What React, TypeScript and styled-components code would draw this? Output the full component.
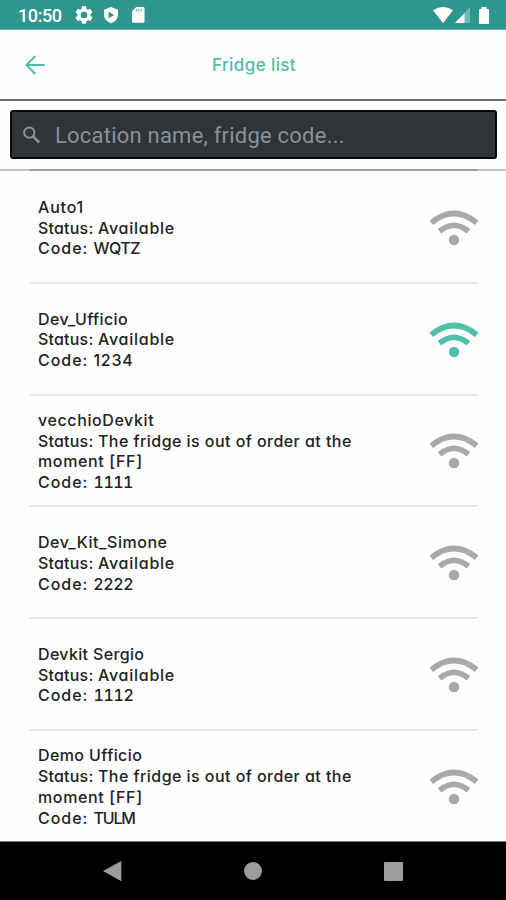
import React from "react";
import styled, { createGlobalStyle } from "styled-components";

const GlobalStyle = createGlobalStyle`
  * { box-sizing: border-box; }
  body { margin: 0; background: #fefefe; }
`;

const Screen = styled.main`
  width: 506px;
  height: 900px;
  display: flex;
  flex-direction: column;
  overflow: hidden;
  background: #fefefe;
`;

const StatusBar = styled.div`
  height: 30px;
  flex: none;
  display: flex;
  align-items: center;
  justify-content: space-between;
  padding: 1px 16px 0 18px;
  background: #2d968d;
  border-bottom: 1px solid #6bb5ae;
  color: #fff;
`;

const StatusGroup = styled.div<{ $gap: number }>`
  display: flex;
  align-items: center;
  gap: ${(p) => p.$gap}px;
  svg { display: block; }
`;

const Clock = styled.span`
  padding-top: 1px;
  font: 500 18px/20px Roboto, sans-serif;
  letter-spacing: -0.4px;
  width: 48px;
  white-space: nowrap;
`;

const Header = styled.header`
  height: 71px;
  flex: none;
  display: grid;
  grid-template-columns: 70px 1fr 70px;
  align-items: center;
  border-bottom: 2px solid #6b6a6b;
`;

const BackButton = styled.button`
  border: 0;
  padding: 0 0 0 24px;
  background: none;
  display: flex;
`;

const Title = styled.h1`
  margin: 0 0 0 2px;
  text-align: center;
  font: 500 17px/24px Inter, sans-serif;
  font-feature-settings: "cv11";
  letter-spacing: 0.4px;
  color: #4fbcab;
`;

const SearchArea = styled.div`
  height: 70px;
  flex: none;
  display: flex;
  flex-direction: column;
  justify-content: space-between;
`;

const SearchBox = styled.div`
  height: 49px;
  margin: 9px 9px 0 10px;
  display: flex;
  align-items: center;
  gap: 12px;
  padding-left: 9px;
  border: 2px solid #070a0c;
  border-radius: 3px;
  background: #2f3437;
  svg { flex: none; }
`;

const Placeholder = styled.span`
  padding-top: 2px;
  font: 400 22px/28px Roboto, sans-serif;
  letter-spacing: 0.22px;
  color: #8a9098;
  white-space: nowrap;
`;

const SearchRule = styled.div`
  height: 2px;
  border: solid #c4c4c4;
  border-width: 0 28px 0 30px;
  background: #9b9b9b;
`;

const List = styled.ul`
  flex: 1;
  min-height: 0;
  margin: 0;
  padding: 1px 28px 0 30px;
  list-style: none;
  overflow: hidden;
`;

const Row = styled.li`
  height: 111.8px;
  display: flex;
  align-items: center;
  justify-content: space-between;
  padding: 2px 0 0 8px;
  border-bottom: 2px solid #e9e9e9;
  svg { flex: none; margin-right: -1px; }
  &:last-child { border-bottom-color: transparent; }
`;

const Info = styled.div`
  display: flex;
  flex-direction: column;
`;

const Line = styled.span`
  font: 500 16px/20.7px Inter, sans-serif;
  color: #222;
  white-space: pre;
`;

const Run = styled.span<{ $track: number; $tabular?: boolean }>`
  letter-spacing: ${(p) => p.$track}px;
  font-feature-settings: "cv11", "calt" 0${(p) => (p.$tabular ? ', "tnum"' : "")};
`;

const NavBar = styled.nav`
  height: 59px;
  flex: none;
  display: flex;
  align-items: center;
  justify-content: space-between;
  padding: 0 102px;
  background: #000;
  border-top: 1px solid #777;
`;

const Wifi = ({ color }: { color: string }) => (
  <svg width="50" height="38" viewBox="0 0 50 38" fill="none" stroke={color} strokeWidth="5.6">
    <path d="M2.3 13.7Q25 -4.7 47.7 13.7" />
    <path d="M10.5 22.3Q25 10.6 39.5 22.3" />
    <circle cx="25" cy="31" r="5.2" fill={color} stroke="none" />
  </svg>
);

type Text = [string, number];
interface Fridge {
  name: Text;
  status: Text;
  more?: Text;
  code: Text;
  tabular?: boolean;
  near?: boolean;
}

const available: Text = ["Available", 0.75];
const outOfOrder: Text = ["The fridge is out of order at the", 0.45];
const moment: Text = ["moment [FF]", 0.65];

const fridges: Fridge[] = [
  { name: ["Auto1", 0.8], status: available, code: ["WQTZ", -0.5] },
  { name: ["Dev_Ufficio", 0.4], status: available, code: ["1234", 0.7], near: true },
  { name: ["vecchioDevkit", 0.6], status: outOfOrder, more: moment, code: ["1111", -0.5], tabular: true },
  { name: ["Dev_Kit_Simone", 0.55], status: available, code: ["2222", 0.1] },
  { name: ["Devkit Sergio", 0.35], status: available, code: ["1112", -0.4], tabular: true },
  { name: ["Demo Ufficio", 0.4], status: outOfOrder, more: moment, code: ["TULM", -1.2] },
];

export default function App() {
  return (
    <Screen>
      <GlobalStyle />
      <StatusBar>
        <StatusGroup $gap={9}>
          <Clock>10:50</Clock>
          <svg width="18" height="18" viewBox="2 2 20 20" fill="#fff">
            <path d="M19.14 12.94c.04-.3.06-.61.06-.94 0-.32-.02-.64-.07-.94l2.03-1.58c.18-.14.23-.41.12-.61l-1.92-3.32c-.12-.22-.37-.29-.59-.22l-2.39.96c-.5-.38-1.03-.7-1.62-.94l-.36-2.54c-.04-.24-.24-.41-.48-.41h-3.84c-.24 0-.43.17-.47.41l-.36 2.54c-.59.24-1.13.57-1.62.94l-2.39-.96c-.22-.08-.47 0-.59.22L2.74 8.87c-.12.21-.08.47.12.61l2.03 1.58c-.05.3-.09.63-.09.94s.02.64.07.94l-2.03 1.58c-.18.14-.23.41-.12.61l1.92 3.32c.12.22.37.29.59.22l2.39-.96c.5.38 1.03.7 1.62.94l.36 2.54c.05.24.24.41.48.41h3.84c.24 0 .44-.17.47-.41l.36-2.54c.59-.24 1.13-.56 1.62-.94l2.39.96c.22.08.47 0 .59-.22l1.92-3.32c.12-.22.07-.47-.12-.61l-2.01-1.58zM12 15.6A3.6 3.6 0 1 1 12 8.4a3.6 3.6 0 0 1 0 7.2z" />
          </svg>
          <svg width="18" height="18" viewBox="0 0 18 18">
            <path d="M9 1L16 3.7V8.6C16 12.7 13 16.1 9 17.2C5 16.1 2 12.7 2 8.6V3.7Z" fill="#fff" />
            <path d="M6.6 5.7L12.2 9L6.6 12.3Z" fill="#2d968d" />
          </svg>
          <svg width="18" height="18" viewBox="0 0 18 18">
            <path d="M7.2 1H14.3Q15.5 1 15.5 2.2V15.6Q15.5 16.8 14.3 16.8H4.2Q3 16.8 3 15.6V5.2Z" fill="#fff" />
            <path d="M7.5 3V5.4M10 3V5.4M12.5 3V5.4" stroke="#2d968d" strokeWidth="1.2" opacity=".65" />
          </svg>
        </StatusGroup>
        <StatusGroup $gap={2}>
          <svg width="20" height="16" viewBox="0 0 20 16"><path d="M0 3.2Q10 -3.2 20 3.2L10 16Z" fill="#fff" /></svg>
          <svg width="15" height="16" viewBox="0 0 15 16">
            <path d="M15 0V16H0Z" fill="#fff" opacity=".32" />
            <path d="M9.5 5.9V16H0Z" fill="#fff" />
          </svg>
          <svg width="18" height="17" viewBox="0 0 18 17"><path d="M9.5 0H14.5V2H16.2Q17 2 17 2.8V16.2Q17 17 16.2 17H7.8Q7 17 7 16.2V2.8Q7 2 7.8 2H9.5Z" fill="#fff" /></svg>
        </StatusGroup>
      </StatusBar>
      <Header>
        <BackButton aria-label="Back">
          <svg width="22" height="20" viewBox="0 0 22 20" fill="none" stroke="#4fbcab" strokeWidth="2">
            <path d="M11.4 1L2.5 10L11.4 19M2.5 10H20.7" />
          </svg>
        </BackButton>
        <Title>Fridge list</Title>
      </Header>
      <SearchArea>
        <SearchBox>
          <svg width="22" height="22" viewBox="0 0 22 22" fill="none" stroke="#8a9098" strokeWidth="2">
            <circle cx="8.3" cy="8.6" r="5.2" />
            <path d="M12 12.3L18.2 18.5" strokeWidth="2.5" />
          </svg>
          <Placeholder>Location name, fridge code...</Placeholder>
        </SearchBox>
        <SearchRule />
      </SearchArea>
      <List>
        {fridges.map(({ name, status, more, code, tabular, near }) => (
          <Row key={name[0]}>
            <Info>
              <Line><Run $track={name[1]}>{name[0]}</Run></Line>
              <Line>
                <Run $track={0.2}>{"Status: "}</Run>
                <Run $track={status[1]}>{status[0]}</Run>
              </Line>
              {more && <Line><Run $track={more[1]}>{more[0]}</Run></Line>}
              <Line>
                <Run $track={0.95}>{"Code: "}</Run>
                <Run $track={code[1]} $tabular={tabular}>{code[0]}</Run>
              </Line>
            </Info>
            <Wifi color={near ? "#52bfac" : "#a9a9a9"} />
          </Row>
        ))}
      </List>
      <NavBar>
        <svg width="20" height="22" viewBox="0 0 20 22"><path d="M1 11L19.3 1V21.2Z" fill="#9c9c9c" /></svg>
        <svg width="20" height="20" viewBox="0 0 20 20"><circle cx="10" cy="10" r="9" fill="#9c9c9c" /></svg>
        <svg width="21" height="21" viewBox="0 0 21 21"><rect x="1" y="1" width="19" height="19" rx="1" fill="#9c9c9c" /></svg>
      </NavBar>
    </Screen>
  );
}
